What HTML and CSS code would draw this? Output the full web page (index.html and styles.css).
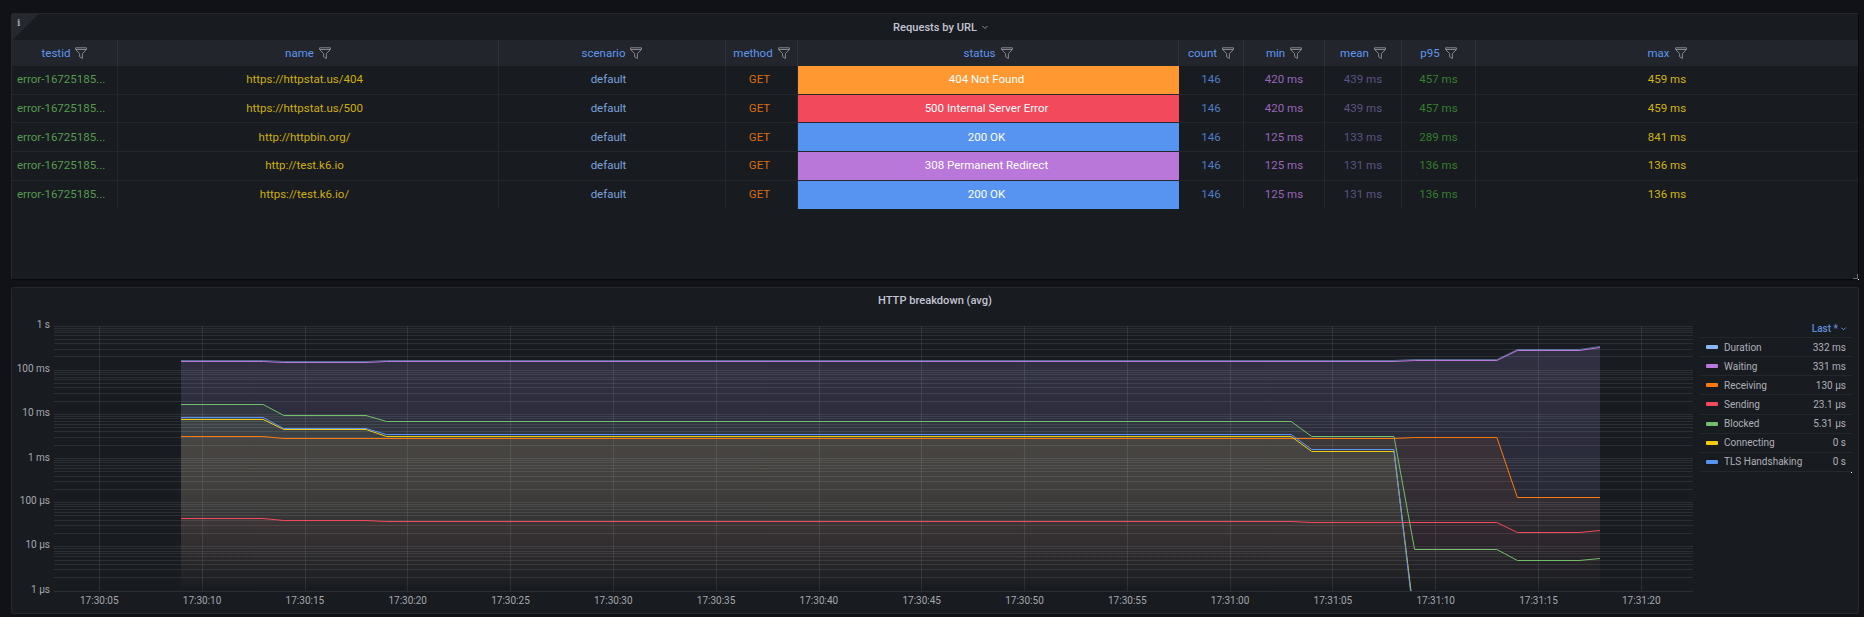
FILE: index.html
```html
<!DOCTYPE html>
<html lang="en">
<head>
<meta charset="utf-8">
<title>k6 dashboard</title>
<link rel="stylesheet" href="styles.css">
</head>
<body>
<svg class="defs" width="0" height="0" aria-hidden="true">
  <defs>
    <symbol id="funnel" viewBox="0 0 12 12">
      <path d="M.6.8h10.8v1.7L7.4 6.600v4.900L4.600 9.800V6.600L.6 2.500zM.6 2.500h10.800" fill="none" stroke="currentColor" stroke-width="1"/>
    </symbol>
  </defs>
</svg>
<main class="page">
  <section class="panel panel-table">
    <div class="corner"><span class="corner-i">i</span></div>
    <header class="panel-title">Requests by URL <svg class="chev" viewBox="0 0 8 8"><path d="M1.500 3l2.500 2.500L6.500 3" fill="none" stroke="currentColor" stroke-width="1"/></svg></header>
    <div class="table">
      <div class="row head">
        <div class="cell"><span>testid</span><svg class="filter"><use href="#funnel"/></svg></div>
        <div class="cell"><span>name</span><svg class="filter"><use href="#funnel"/></svg></div>
        <div class="cell"><span>scenario</span><svg class="filter"><use href="#funnel"/></svg></div>
        <div class="cell"><span>method</span><svg class="filter"><use href="#funnel"/></svg></div>
        <div class="cell"><span>status</span><svg class="filter"><use href="#funnel"/></svg></div>
        <div class="cell"><span>count</span><svg class="filter"><use href="#funnel"/></svg></div>
        <div class="cell"><span>min</span><svg class="filter"><use href="#funnel"/></svg></div>
        <div class="cell"><span>mean</span><svg class="filter"><use href="#funnel"/></svg></div>
        <div class="cell"><span>p95</span><svg class="filter"><use href="#funnel"/></svg></div>
        <div class="cell last"><span>max</span><svg class="filter"><use href="#funnel"/></svg></div>
      </div>
      <div class="row">
        <div class="cell c-id">error-16725185...</div><div class="cell c-name">https://httpstat.us/404</div><div class="cell c-scen">default</div><div class="cell c-meth">GET</div><div class="cell c-status s-orange">404 Not Found</div><div class="cell c-count">146</div><div class="cell c-min">420 ms</div><div class="cell c-mean">439 ms</div><div class="cell c-p95">457 ms</div><div class="cell c-max last">459 ms</div>
      </div>
      <div class="row">
        <div class="cell c-id">error-16725185...</div><div class="cell c-name">https://httpstat.us/500</div><div class="cell c-scen">default</div><div class="cell c-meth">GET</div><div class="cell c-status s-red">500 Internal Server Error</div><div class="cell c-count">146</div><div class="cell c-min">420 ms</div><div class="cell c-mean">439 ms</div><div class="cell c-p95">457 ms</div><div class="cell c-max last">459 ms</div>
      </div>
      <div class="row">
        <div class="cell c-id">error-16725185...</div><div class="cell c-name">http://httpbin.org/</div><div class="cell c-scen">default</div><div class="cell c-meth">GET</div><div class="cell c-status s-blue">200 OK</div><div class="cell c-count">146</div><div class="cell c-min">125 ms</div><div class="cell c-mean">133 ms</div><div class="cell c-p95">289 ms</div><div class="cell c-max last">841 ms</div>
      </div>
      <div class="row">
        <div class="cell c-id">error-16725185...</div><div class="cell c-name">http://test.k6.io</div><div class="cell c-scen">default</div><div class="cell c-meth">GET</div><div class="cell c-status s-purple">308 Permanent Redirect</div><div class="cell c-count">146</div><div class="cell c-min">125 ms</div><div class="cell c-mean">131 ms</div><div class="cell c-p95">136 ms</div><div class="cell c-max last">136 ms</div>
      </div>
      <div class="row end">
        <div class="cell c-id">error-16725185...</div><div class="cell c-name">https://test.k6.io/</div><div class="cell c-scen">default</div><div class="cell c-meth">GET</div><div class="cell c-status s-blue">200 OK</div><div class="cell c-count">146</div><div class="cell c-min">125 ms</div><div class="cell c-mean">131 ms</div><div class="cell c-p95">136 ms</div><div class="cell c-max last">136 ms</div>
      </div>
    </div>
    <span class="resize"></span>
  </section>

  <section class="panel panel-chart">
    <header class="panel-title">HTTP breakdown (avg)</header>
    <div class="chart-body">
      <svg class="plot" viewBox="12 314 1686 298" width="1686" height="298" role="img" aria-label="HTTP breakdown chart">
        <defs>
          <clipPath id="plotclip"><rect x="54" y="326" width="1639" height="265"/></clipPath>
          <g id="decade">
            <path d="M54 0H1693M54-13.300H1693M54-21.100H1693M54-26.600H1693M54-30.900H1693M54-34.400H1693M54-37.300H1693M54-39.900H1693M54-42.100H1693"/>
          </g>
          <linearGradient id="g-dur" gradientUnits="userSpaceOnUse" x1="0" y1="326" x2="0" y2="591"><stop offset="0" stop-color="#8ab8ff" stop-opacity=".09"/><stop offset=".6" stop-color="#8ab8ff" stop-opacity=".06"/><stop offset="1" stop-color="#8ab8ff" stop-opacity="0"/></linearGradient>
          <linearGradient id="g-wait" gradientUnits="userSpaceOnUse" x1="0" y1="326" x2="0" y2="591"><stop offset="0" stop-color="#b877d9" stop-opacity=".1"/><stop offset=".6" stop-color="#b877d9" stop-opacity=".07"/><stop offset="1" stop-color="#b877d9" stop-opacity="0"/></linearGradient>
          <linearGradient id="g-recv" gradientUnits="userSpaceOnUse" x1="0" y1="326" x2="0" y2="591"><stop offset="0" stop-color="#ff780a" stop-opacity=".09"/><stop offset=".6" stop-color="#ff780a" stop-opacity=".06"/><stop offset="1" stop-color="#ff780a" stop-opacity="0"/></linearGradient>
          <linearGradient id="g-send" gradientUnits="userSpaceOnUse" x1="0" y1="326" x2="0" y2="591"><stop offset="0" stop-color="#f2495c" stop-opacity=".1"/><stop offset=".6" stop-color="#f2495c" stop-opacity=".06"/><stop offset="1" stop-color="#f2495c" stop-opacity="0"/></linearGradient>
          <linearGradient id="g-block" gradientUnits="userSpaceOnUse" x1="0" y1="326" x2="0" y2="591"><stop offset="0" stop-color="#73bf69" stop-opacity=".08"/><stop offset=".6" stop-color="#73bf69" stop-opacity=".05"/><stop offset="1" stop-color="#73bf69" stop-opacity="0"/></linearGradient>
          <linearGradient id="g-conn" gradientUnits="userSpaceOnUse" x1="0" y1="326" x2="0" y2="591"><stop offset="0" stop-color="#f2cc0c" stop-opacity=".07"/><stop offset=".6" stop-color="#f2cc0c" stop-opacity=".04"/><stop offset="1" stop-color="#f2cc0c" stop-opacity="0"/></linearGradient>
          <linearGradient id="g-tls" gradientUnits="userSpaceOnUse" x1="0" y1="326" x2="0" y2="591"><stop offset="0" stop-color="#5794f2" stop-opacity=".07"/><stop offset=".6" stop-color="#5794f2" stop-opacity=".04"/><stop offset="1" stop-color="#5794f2" stop-opacity="0"/></linearGradient>
        </defs>

        <g class="fills" clip-path="url(#plotclip)">
          <path fill="url(#g-dur)" d="M181 361.500H263.200L283.800 362.500H366L386.600 361.500H1394L1414.600 360.500H1496.900L1517.400 350.500H1579.100L1600 347.500V591H181Z"/>
          <path fill="url(#g-wait)" d="M181 361.500H263.200L283.800 362.500H366L386.600 361.500H1394L1414.600 360.500H1496.900L1517.400 350.500H1579.100L1600 347.500V591H181Z"/>
          <path fill="url(#g-recv)" d="M181 436.500H263.200L283.800 438.500H1394L1414.600 437.500H1496.900L1517.400 497.500H1600V591H181Z"/>
          <path fill="url(#g-send)" d="M181 518.500H263.200L283.800 520.500H366L386.600 521.500H1291.200L1311.800 522.500H1496.900L1517.400 532.500H1579.100L1600 530.500V591H181Z"/>
          <path fill="url(#g-block)" d="M181 404.500H263.200L283.800 415.500H366L386.600 421.500H1291.200L1311.800 436.500H1394L1414.600 549.500H1496.900L1517.400 560.500H1579.100L1600 558.500V591H181Z"/>
          <path fill="url(#g-conn)" d="M181 419.500H263.200L283.800 429.500H366L386.600 436.500H1291.200L1311.800 451.500H1394L1411 591H181Z"/>
          <path fill="url(#g-tls)" d="M181 417.500H263.200L283.800 428.500H366L386.600 434.500H1291.200L1311.800 449.500H1394L1410.500 591H181Z"/>
        </g>

        <g class="grid">
          <use href="#decade" y="591"/><use href="#decade" y="546.830"/><use href="#decade" y="502.670"/>
          <use href="#decade" y="458.500"/><use href="#decade" y="414.330"/><use href="#decade" y="370.170"/>
          <path d="M54 326H1693"/>
          <path d="M99.500 326V591M202.500 326V591M305.500 326V591M407.500 326V591M510.500 326V591M613.500 326V591M716.500 326V591M819.500 326V591M921.500 326V591M1024.500 326V591M1127.500 326V591M1230.500 326V591M1332.500 326V591M1435.500 326V591M1538.500 326V591M1641.500 326V591"/>
        </g>

        <g class="lines" clip-path="url(#plotclip)">
          <path stroke="#8ab8ff" stroke-opacity=".5" d="M181 360.500H263.200L283.800 361.500H366L386.600 360.500H1394L1414.600 359.500H1496.900L1517.400 349.500H1579.100L1600 346.500"/>
          <path stroke="#b877d9" d="M181 361.500H263.200L283.800 362.500H366L386.600 361.500H1394L1414.600 360.500H1496.900L1517.400 350.500H1579.100L1600 347.500"/>
          <path stroke="#ff780a" d="M181 436.500H263.200L283.800 438.500H1394L1414.600 437.500H1496.900L1517.400 497.500H1600"/>
          <path stroke="#f2495c" d="M181 518.500H263.200L283.800 520.500H366L386.600 521.500H1291.200L1311.800 522.500H1496.900L1517.400 532.500H1579.100L1600 530.500"/>
          <path stroke="#73bf69" d="M181 404.500H263.200L283.800 415.500H366L386.600 421.500H1291.200L1311.800 436.500H1394L1414.600 549.500H1496.900L1517.400 560.500H1579.100L1600 558.500"/>
          <path stroke="#f2cc0c" d="M181 419.500H263.200L283.800 429.500H366L386.600 436.500H1291.200L1311.800 451.500H1394L1411 591"/>
          <path stroke="#5794f2" d="M181 417.500H263.200L283.800 428.500H366L386.600 434.500H1291.200L1311.800 449.500H1394L1410.500 591"/>
        </g>

        <g class="axis y-axis">
          <text x="50" y="328">1 s</text><text x="50" y="372">100 ms</text><text x="50" y="416">10 ms</text>
          <text x="50" y="460.500">1 ms</text><text x="50" y="504">100 µs</text><text x="50" y="548">10 µs</text><text x="50" y="593">1 µs</text>
        </g>
        <g class="axis x-axis">
          <text x="99.300" y="604">17:30:05</text><text x="202.100" y="604">17:30:10</text><text x="304.900" y="604">17:30:15</text><text x="407.700" y="604">17:30:20</text>
          <text x="510.500" y="604">17:30:25</text><text x="613.300" y="604">17:30:30</text><text x="716.100" y="604">17:30:35</text><text x="818.900" y="604">17:30:40</text>
          <text x="921.700" y="604">17:30:45</text><text x="1024.500" y="604">17:30:50</text><text x="1127.300" y="604">17:30:55</text><text x="1230.100" y="604">17:31:00</text>
          <text x="1332.900" y="604">17:31:05</text><text x="1435.700" y="604">17:31:10</text><text x="1538.500" y="604">17:31:15</text><text x="1641.300" y="604">17:31:20</text>
        </g>
      </svg>
      <aside class="legend">
        <div class="legend-head">Last * <svg class="chev small" viewBox="0 0 8 8"><path d="M1.500 3l2.500 2.500L6.500 3" fill="none" stroke="currentColor" stroke-width="1"/></svg></div>
        <div class="legend-row"><i class="swatch sw-dur"></i><span class="legend-name">Duration</span><span>332 ms</span></div>
        <div class="legend-row"><i class="swatch sw-wait"></i><span class="legend-name">Waiting</span><span>331 ms</span></div>
        <div class="legend-row"><i class="swatch sw-recv"></i><span class="legend-name">Receiving</span><span>130 µs</span></div>
        <div class="legend-row"><i class="swatch sw-send"></i><span class="legend-name">Sending</span><span>23.1 µs</span></div>
        <div class="legend-row"><i class="swatch sw-block"></i><span class="legend-name">Blocked</span><span>5.31 µs</span></div>
        <div class="legend-row"><i class="swatch sw-conn"></i><span class="legend-name">Connecting</span><span>0 s</span></div>
        <div class="legend-row"><i class="swatch sw-tls"></i><span class="legend-name">TLS Handshaking</span><span>0 s</span></div>
        <span class="dot"></span>
      </aside>
    </div>
  </section>
</main>
</body>
</html>
```

FILE: styles.css
```css
* { box-sizing: border-box; }
html, body { margin: 0; padding: 0; }
body {
  background: #111217;
  color: #ccccdc;
  font-family: Roboto, "Liberation Sans", sans-serif;
  font-size: 11.5px;
  width: 1864px;
  height: 617px;
  overflow: hidden;
}
.defs { position: absolute; }
.page {
  display: flex;
  flex-direction: column;
  gap: 7px;
  padding: 13px 5px 0 11px;
}
.panel {
  position: relative;
  background: #181b1f;
  border: 1px solid #24272b;
  border-radius: 2px;
}
.panel-table {
  height: 267px;
  border-right-color: #08090b;
  border-bottom-color: #08090b;
}
.panel-chart { height: 327px; }
.panel-title {
  height: 26px;
  display: flex;
  align-items: center;
  justify-content: center;
  font-size: 11.1px;
  font-weight: 500;
  color: #c4c5d3;
}
.panel-chart .panel-title { padding-bottom: 2px; }
.chev { width: 8px; height: 8px; color: #8e9096; margin: 0 -12px 0 4px; }
.chev.small { width: 7px; height: 7px; margin: 1px 0 0 2px; color: #6e9fff; }
.corner {
  position: absolute;
  left: 0;
  top: 0;
  width: 26px;
  height: 26px;
  background: linear-gradient(135deg, #25282e 50%, transparent 50%);
}
.corner-i {
  position: absolute;
  left: 5px;
  top: 4px;
  font-family: "DejaVu Serif", serif;
  font-weight: 700;
  font-size: 9px;
  line-height: 10px;
  color: #a2a3a8;
}
.table { display: flex; flex-direction: column; }
.row {
  display: grid;
  grid-template-columns: 106px 381px 227px 72px 381px 65px 81px 77px 74px 1fr;
  height: 28.67px;
  border-bottom: 1px solid #23262b;
}
.row.end { border-bottom: 0; }
.row.head {
  height: 26px;
  background: #22252b;
  border-bottom: 0;
  color: #5f97f0;
}
.cell {
  display: flex;
  align-items: center;
  justify-content: center;
  gap: 5px;
  min-width: 0;
  padding-bottom: 1px;
  border-right: 1px solid #24272c;
  white-space: nowrap;
}
.head .cell { border-right-color: #2f3238; }
.cell.last { border-right: 0; }
.filter { width: 12px; height: 12px; color: #85878c; flex: none; margin-top: 1px; }
.c-id { justify-content: flex-start; padding-left: 5px; color: #569a50; }
.c-name { color: #cdae0e; padding-right: 7px; }
.c-scen { color: #7ba1de; padding-right: 7px; }
.c-meth { color: #dd6d0a; padding-right: 4px; }
.c-count { color: #4e7cc6; }
.c-min { color: #9a66bb; }
.c-mean { color: #5c5384; }
.c-p95 { color: #357f2e; }
.c-max { color: #d4b50f; }
.c-status { color: #fff; border-right: 0; padding-right: 4px; }
.s-orange { background: #ff9830; }
.s-red { background: #f2495c; }
.s-blue { background: #5794f2; }
.s-purple { background: #b877d9; }
.resize {
  position: absolute;
  right: 0;
  bottom: 0;
  width: 5px;
  height: 5px;
  border-right: 1px solid #6a6c70;
  border-bottom: 1px solid #6a6c70;
}
.resize::after {
  content: "";
  position: absolute;
  right: -2px;
  bottom: -2px;
  width: 1px;
  height: 1px;
  background: #fff;
}
.chart-body { display: flex; align-items: flex-start; }
.plot { display: block; flex: none; }
.grid path, .grid use { fill: none; stroke: rgba(240, 250, 255, 0.09); stroke-width: 1; shape-rendering: crispEdges; }
.lines path { fill: none; stroke-width: 1; }
.axis text { font-family: Roboto, "Liberation Sans", sans-serif; font-size: 10px; fill: #a6a8ae; }
.y-axis text { text-anchor: end; }
.x-axis text { text-anchor: middle; }
.legend {
  position: relative;
  width: 152px;
  margin: 5px 0 0 2px;
  font-size: 10px;
  color: #aeb0b8;
}
.legend-head {
  height: 19px;
  display: flex;
  align-items: center;
  justify-content: flex-end;
  padding-right: 5px;
  color: #5f8ed8;
  font-weight: 500;
  border-bottom: 1px solid #24272b;
}
.legend-row {
  height: 19.14px;
  display: flex;
  align-items: center;
  padding: 0 6px;
  border-bottom: 1px solid #24272b;
}
.legend-name { flex: 1; }
.swatch { width: 12px; height: 4px; margin-right: 6px; border-radius: 1px; }
.sw-dur { background: #8ab8ff; }
.sw-wait { background: #b877d9; }
.sw-recv { background: #ff780a; }
.sw-send { background: #f2495c; }
.sw-block { background: #73bf69; }
.sw-conn { background: #f2cc0c; }
.sw-tls { background: #5794f2; }
.dot {
  position: absolute;
  right: 0;
  top: 153px;
  width: 1px;
  height: 1px;
  background: #fff;
}
```
